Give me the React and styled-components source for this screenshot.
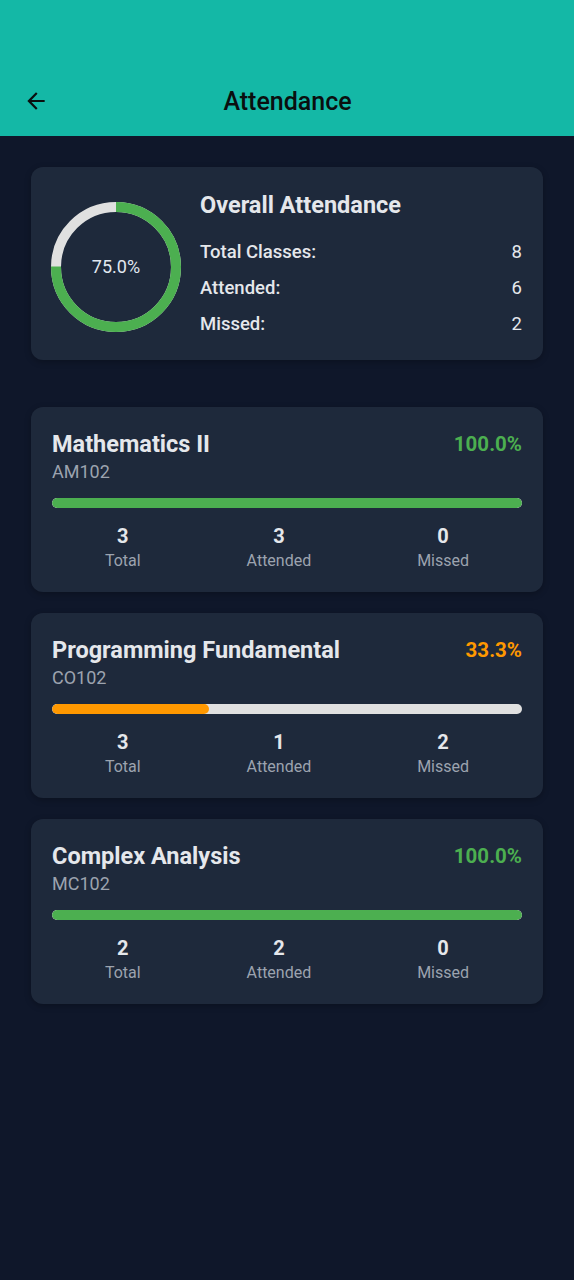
import React from 'react';
import styled, { createGlobalStyle } from 'styled-components';

const GlobalStyle = createGlobalStyle`
  body {
    margin: 0;
    background: #0f172a;
    font-family: Roboto, "Noto Sans", sans-serif;
  }
`;

const Page = styled.div`
  min-height: 1280px;
  background: #0f172a;
`;

const Header = styled.div`
  height: 136px;
  background: #14b8a6;
  display: flex;
  align-items: flex-end;
`;

const Toolbar = styled.div`
  position: relative;
  width: 100%;
  height: 70px;
  display: flex;
  align-items: center;
  justify-content: center;
`;

const BackButton = styled.div`
  position: absolute;
  left: 23px;
  top: 22px;
  width: 26px;
  height: 26px;
  display: flex;
`;

const Title = styled.h1`
  margin: 0 0 0 1px;
  font-size: 25px;
  font-weight: 500;
  color: #0a0f0f;
`;

const Body = styled.div`
  padding: 31px 31px;
  display: flex;
  flex-direction: column;
`;

const Card = styled.div`
  background: #1e293b;
  border-radius: 12px;
  box-shadow: 0 2px 6px rgba(0, 0, 0, 0.25);
  margin-bottom: ${p => p.$gap || 21}px;
`;

const SummaryCard = styled(Card)`
  display: flex;
  align-items: center;
  padding: 24px 21px 18px 20px;
  gap: 19px;
`;

const Ring = styled.div`
  position: relative;
  width: 130px;
  height: 130px;
  flex-shrink: 0;
`;

const RingLabel = styled.div`
  position: absolute;
  inset: 0;
  display: flex;
  align-items: center;
  justify-content: center;
  font-size: 18px;
  color: #e2e8f0;
`;

const SummaryInfo = styled.div`
  flex: 1;
  display: flex;
  flex-direction: column;
`;

const SummaryTitle = styled.div`
  font-size: 23.5px;
  font-weight: 700;
  line-height: 28px;
  color: #e5e7eb;
  margin-bottom: 15px;
`;

const SummaryRow = styled.div`
  display: flex;
  justify-content: space-between;
  align-items: center;
  height: 36px;
  font-size: 18.5px;
  color: #e5e7eb;
`;

const RowLabel = styled.span`
  font-weight: 500;
`;

const RowValue = styled.span`
  font-weight: 400;
`;

const SubjectCard = styled(Card)`
  padding: 23px 21px 21px 21px;
  display: flex;
  flex-direction: column;
`;

const SubjectHead = styled.div`
  display: flex;
  justify-content: space-between;
  align-items: flex-start;
`;

const SubjectName = styled.div`
  font-size: 23.5px;
  font-weight: 700;
  line-height: 28px;
  color: #e5e7eb;
`;

const Percent = styled.div`
  font-size: 20.5px;
  font-weight: 700;
  line-height: 28px;
  color: ${p => p.$color};
`;

const Code = styled.div`
  margin-top: 3px;
  font-size: 18px;
  line-height: 22px;
  color: #9ca3af;
`;

const Track = styled.div`
  margin-top: 15px;
  height: 10px;
  border-radius: 5px;
  background: #e0e0e0;
  overflow: hidden;
`;

const Fill = styled.div`
  height: 100%;
  border-radius: 5px;
  background: ${p => p.$color};
`;

const Stats = styled.div`
  margin-top: 16px;
  display: flex;
  justify-content: space-around;
`;

const Stat = styled.div`
  display: flex;
  flex-direction: column;
  align-items: center;
`;

const StatNum = styled.div`
  font-size: 20px;
  font-weight: 700;
  line-height: 24px;
  color: #e5e7eb;
`;

const StatLabel = styled.div`
  margin-top: 3px;
  font-size: 16px;
  line-height: 20px;
  color: #9ca3af;
`;

const subjects = [
  { name: 'Mathematics II', code: 'AM102', total: 3, attended: 3 },
  { name: 'Programming Fundamental', code: 'CO102', total: 3, attended: 1 },
  { name: 'Complex Analysis', code: 'MC102', total: 2, attended: 2 },
];

const GREEN = '#4caf50';
const ORANGE = '#ff9800';

function ProgressRing({ value }) {
  const r = 60;
  const c = 2 * Math.PI * r;
  return (
    <Ring>
      <svg width="130" height="130" viewBox="0 0 130 130">
        <circle cx="65" cy="65" r={r} fill="none" stroke="#e0e0e0" strokeWidth="10" />
        <circle
          cx="65"
          cy="65"
          r={r}
          fill="none"
          stroke={GREEN}
          strokeWidth="10"
          strokeDasharray={`${c * value} ${c}`}
          transform="rotate(-90 65 65)"
        />
      </svg>
      <RingLabel>{(value * 100).toFixed(1)}%</RingLabel>
    </Ring>
  );
}

export default function App() {
  const total = subjects.reduce((s, x) => s + x.total, 0);
  const attended = subjects.reduce((s, x) => s + x.attended, 0);

  return (
    <Page>
      <GlobalStyle />
      <Header>
        <Toolbar>
          <BackButton>
            <svg width="26" height="26" viewBox="0 0 24 24">
              <path d="M20 11H7.83l5.59-5.59L12 4l-8 8 8 8 1.41-1.41L7.83 13H20v-2z" fill="#0a0f0f" />
            </svg>
          </BackButton>
          <Title>Attendance</Title>
        </Toolbar>
      </Header>
      <Body>
        <SummaryCard $gap={47}>
          <ProgressRing value={attended / total} />
          <SummaryInfo>
            <SummaryTitle>Overall Attendance</SummaryTitle>
            <SummaryRow><RowLabel>Total Classes:</RowLabel><RowValue>{total}</RowValue></SummaryRow>
            <SummaryRow><RowLabel>Attended:</RowLabel><RowValue>{attended}</RowValue></SummaryRow>
            <SummaryRow><RowLabel>Missed:</RowLabel><RowValue>{total - attended}</RowValue></SummaryRow>
          </SummaryInfo>
        </SummaryCard>

        {subjects.map(s => {
          const pct = (s.attended / s.total) * 100;
          const color = pct >= 75 ? GREEN : ORANGE;
          return (
            <SubjectCard key={s.code}>
              <SubjectHead>
                <SubjectName>{s.name}</SubjectName>
                <Percent $color={color}>{pct.toFixed(1)}%</Percent>
              </SubjectHead>
              <Code>{s.code}</Code>
              <Track>
                <Fill $color={color} style={{ width: `${pct}%` }} />
              </Track>
              <Stats>
                <Stat><StatNum>{s.total}</StatNum><StatLabel>Total</StatLabel></Stat>
                <Stat><StatNum>{s.attended}</StatNum><StatLabel>Attended</StatLabel></Stat>
                <Stat><StatNum>{s.total - s.attended}</StatNum><StatLabel>Missed</StatLabel></Stat>
              </Stats>
            </SubjectCard>
          );
        })}
      </Body>
    </Page>
  );
}
